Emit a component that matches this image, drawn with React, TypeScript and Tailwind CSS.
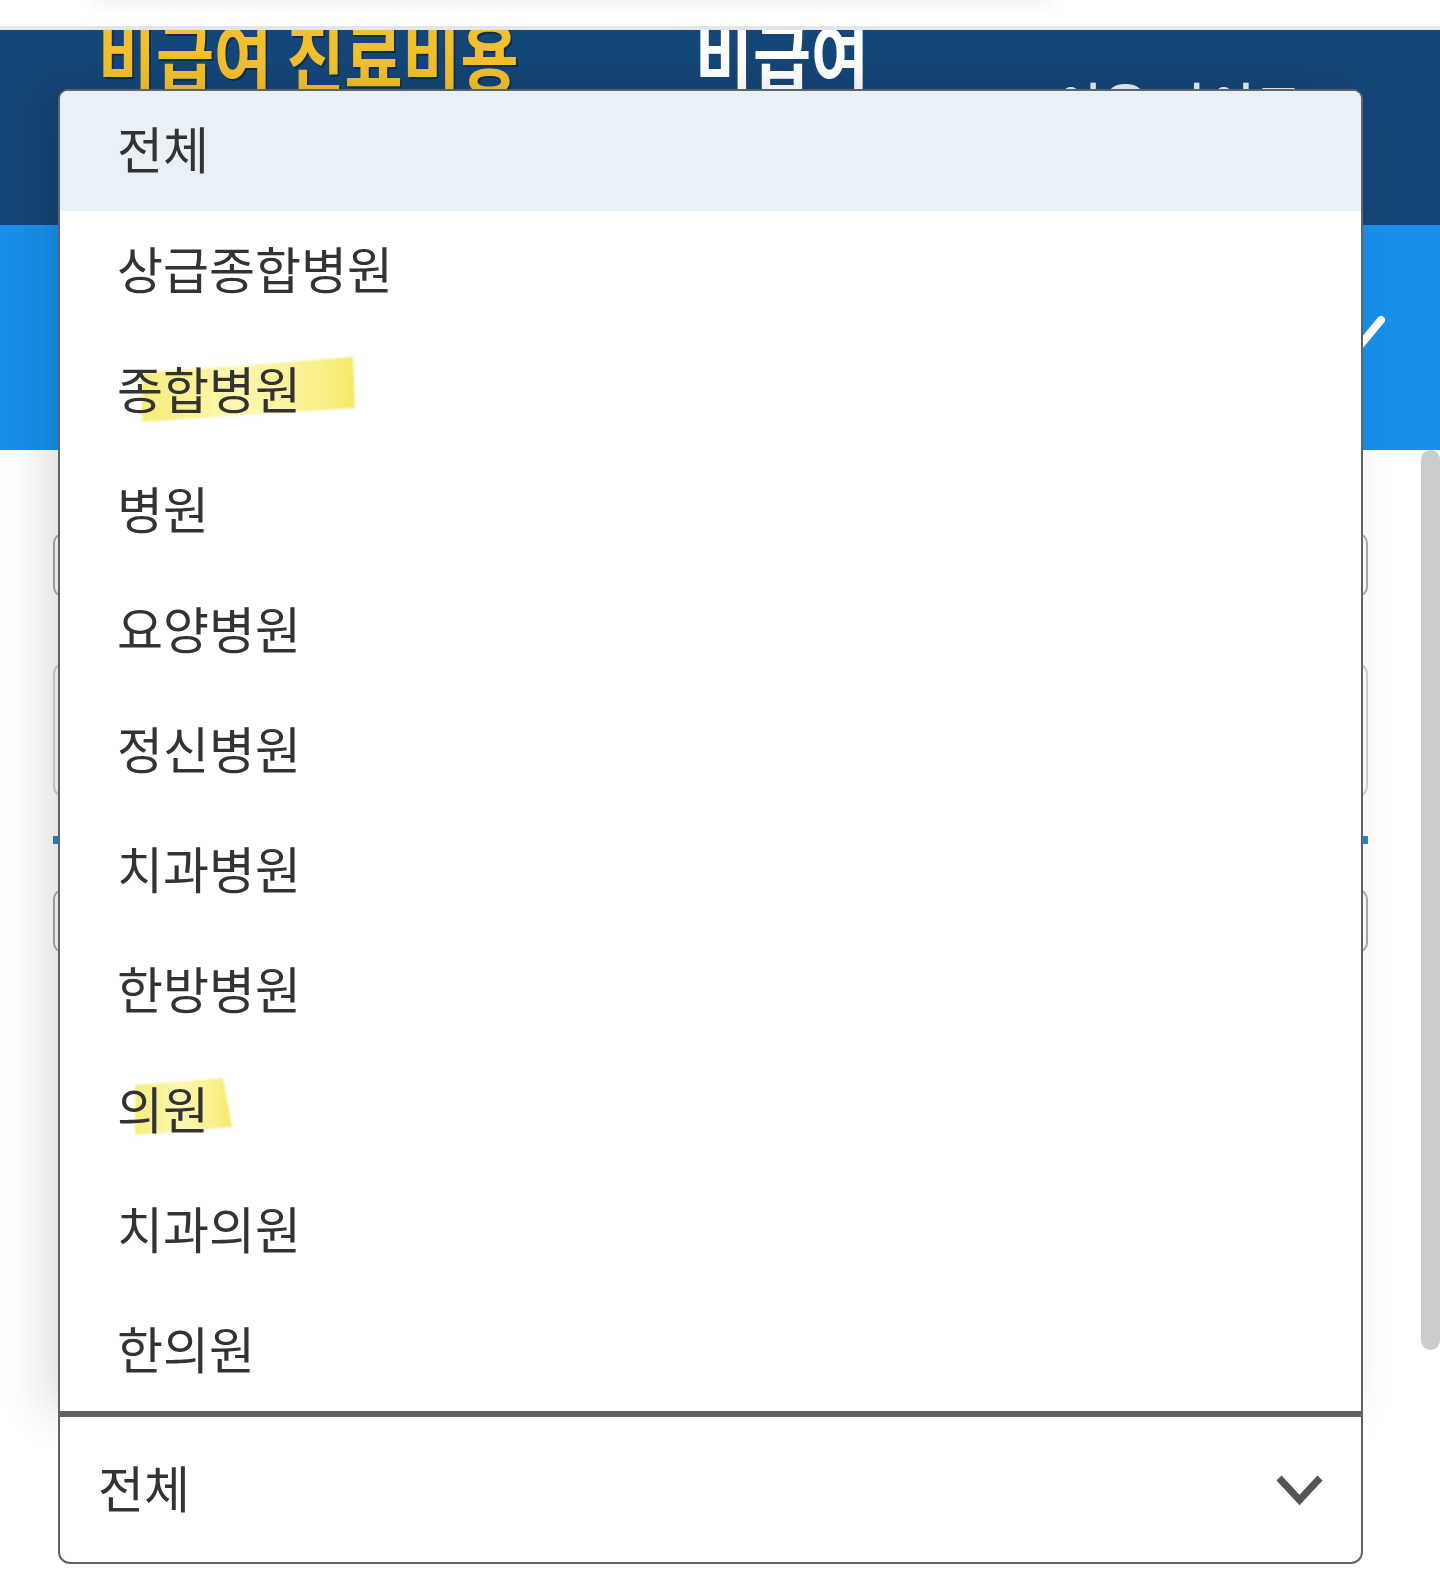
import React from "react";

const options = [
  "전체",
  "상급종합병원",
  "종합병원",
  "병원",
  "요양병원",
  "정신병원",
  "치과병원",
  "한방병원",
  "의원",
  "치과의원",
  "한의원",
];

// marker strokes drawn over the screenshot, keyed by option index
const marks: Record<number, string> = {
  2: "82,42 293,26 295,77 82,91",
  8: "75,34 163,27 172,76 75,84",
};

function Marker({ points, id }: { points: string; id: string }) {
  return (
    <svg className="absolute left-0 top-0 w-[320px] h-[120px]" viewBox="0 0 320 120">
      <defs>
        <linearGradient id={id} x1="0" x2="1" y1="0" y2="0">
          <stop offset="0" stopColor="#f6ed7c" />
          <stop offset="0.45" stopColor="#fcf7b2" />
          <stop offset="0.85" stopColor="#f9f08a" />
          <stop offset="1" stopColor="#f3e961" />
        </linearGradient>
        <filter id={id + "-soft"}>
          <feGaussianBlur stdDeviation="0.8" />
        </filter>
      </defs>
      <polygon points={points} fill={`url(#${id})`} filter={`url(#${id}-soft)`} />
    </svg>
  );
}

export default function App() {
  return (
    <div className="relative w-[1440px] h-[1591px] overflow-hidden bg-white font-['Noto_Sans_CJK_KR',sans-serif]">
      {/* Top strip with the shadow of a floating bar above */}
      <div className="relative h-[26px] bg-white overflow-hidden">
        <div className="ml-[92px] w-[964px] h-[8px] -mt-[8px] rounded-b-[20px] bg-white shadow-[0_4px_14px_rgba(0,0,0,0.07)]" />
      </div>
      <div className="h-[4px] bg-[#e3e5e8]" />

      {/* Header */}
      <div className="h-[195px] bg-[#144677] overflow-hidden flex items-start">
        <div className="ml-[98px] w-[597px] shrink-0 mt-[-14px]">
          <span className="inline-block origin-left scale-x-[0.83] text-[76px] leading-none font-bold text-[#f2c02e] whitespace-nowrap [text-shadow:2px_2px_0_rgba(0,0,0,0.35)]">
            비급여 진료비용
          </span>
        </div>
        <div className="w-[360px] shrink-0 mt-[-14px]">
          <span className="inline-block origin-left scale-x-[0.83] text-[76px] leading-none font-bold text-white whitespace-nowrap">
            비급여
          </span>
        </div>
        <div className="mt-[46px]">
          <span className="inline-block origin-left scale-x-[0.8] text-[64px] leading-none font-medium text-[#e8eef5] whitespace-nowrap">
            이용 가이드
          </span>
        </div>
      </div>

      {/* Tab band */}
      <div className="relative h-[225px] bg-[#1890ea]">
        <svg className="absolute left-[1340px] top-[88px] w-[50px] h-[50px]" viewBox="0 0 50 50">
          <line x1="12" y1="42" x2="41" y2="7" stroke="#ffffff" strokeWidth="8" strokeLinecap="round" />
        </svg>
      </div>

      {/* Form content behind the open list */}
      <div className="px-[53px] pr-[72px] pt-[83px] flex flex-col">
        <div className="h-[64px] rounded-[10px] border-2 border-[#a9acb0] bg-white" />
        <div className="mt-[65px] h-[136px] rounded-[12px] border-2 border-[#d0d2d6] bg-white" />
        <div className="mt-[38px] h-[8px] bg-[#2b83cc]" />
        <div className="mt-[45px] h-[64px] rounded-[10px] border-2 border-[#a9acb0] bg-white" />
      </div>

      {/* Page scrollbar */}
      <div className="absolute right-0 top-[450px] w-[19px] h-[900px] rounded-full bg-[#cccccc]" />

      {/* Open select */}
      <div className="absolute left-[58px] top-[89px] w-[1305px]">
        <ul className="border-2 border-b-0 border-[#5c636b] rounded-t-[10px] overflow-hidden bg-white shadow-[-14px_0_44px_rgba(0,0,0,0.13)]">
          {options.map((label, i) => (
            <li
              key={label}
              className={`relative h-[120px] flex items-center pl-[57px] pb-[8px] ${i === 0 ? "bg-[#eaf1f6]" : "bg-white"}`}
            >
              {marks[i] && <Marker points={marks[i]} id={`mark-${i}`} />}
              <span className="relative text-[50px] leading-none text-[#333333]">{label}</span>
            </li>
          ))}
        </ul>
        <div className="h-[153px] border-t-[6px] border-x-2 border-b-2 border-[#5c636b] rounded-b-[12px] bg-white flex items-center justify-between pl-[38px] pr-[37px]">
          <span className="text-[50px] leading-none text-[#333333] pb-[8px]">전체</span>
          <svg className="w-[49px] h-[32px] blur-[0.6px]" viewBox="0 0 49 32">
            <polyline points="4,4 24.5,26 45,4" fill="none" stroke="#555555" strokeWidth="7" />
          </svg>
        </div>
      </div>
    </div>
  );
}
